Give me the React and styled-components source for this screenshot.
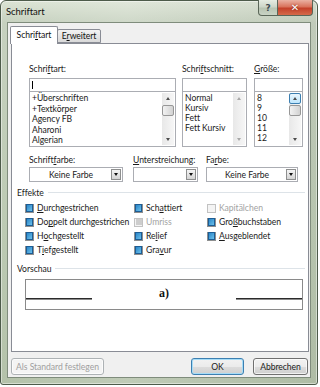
import styled, { createGlobalStyle, css } from "styled-components";

const Global = createGlobalStyle`
  html, body { margin: 0; padding: 0; background: #ffffff; }
  body {
    font-family: Lato, "Liberation Sans", sans-serif;
    font-size: 8.6px;
    letter-spacing: -0.05px;
    color: #1b1b1b;
  }
  * { box-sizing: border-box; }
`;

const Frame = styled.div`
  width: 318px;
  height: 385px;
  border: 1px solid #4d5b4a;
  border-radius: 6px 6px 3px 3px;
  background: linear-gradient(90deg, rgba(255,255,255,0.0), rgba(255,255,255,0.15) 40%, rgba(0,0,0,0.03)),
    linear-gradient(#dbe3d4, #c6d1bf 22px, #bccab3 60%, #b4c2aa);
  box-shadow: inset 0 0 0 1px rgba(255,255,255,0.45);
  display: flex;
  flex-direction: column;
  padding: 0 6px 6px 6px;
`;

const TitleBar = styled.div`
  height: 21px;
  display: flex;
  align-items: flex-start;
`;

const Title = styled.div`
  margin: 5px 0 0 -1px;
  font-size: 9.5px;
  color: #111;
`;

const TitleButtons = styled.div`
  margin: -1px -2px 0 auto;
  display: flex;
`;

const CaptionButton = styled.div`
  height: 16px;
  width: ${(p) => p.$w}px;
  border: 1px solid #5a6658;
  border-top: none;
  display: flex;
  align-items: center;
  justify-content: center;
  font-family: "DejaVu Sans", sans-serif;
  font-weight: bold;
  ${(p) =>
    p.$close
      ? css`
          border-radius: 0 0 4px 0;
          border-left: none;
          background: linear-gradient(#eab1a2, #d9735c 45%, #c4412a 55%, #d56a4a);
          color: #fff;
          font-size: 10px;
          text-shadow: 0 0 2px #7a1a0a;
        `
      : css`
          border-radius: 0 0 0 4px;
          background: linear-gradient(#e6ece2, #cdd6c8 45%, #b8c4b2 55%, #c9d3c4);
          color: #3c4a50;
          font-size: 9px;
        `}
`;

const Client = styled.div`
  flex: 1;
  background: #f0f0f0;
  border: 1px solid #7f8c7c;
  display: flex;
  flex-direction: column;
  padding: 3px 1px 2px 3px;
`;

const TabRow = styled.div`
  height: 17px;
  display: flex;
  align-items: flex-end;
  position: relative;
  z-index: 1;
`;

const Tab = styled.div`
  border: 1px solid #898c95;
  border-radius: 2px 2px 0 0;
  display: flex;
  align-items: center;
  justify-content: center;
  color: #111;
  ${(p) =>
    p.$active
      ? css`
          width: 48px;
          height: 18px;
          margin: 0 0 -1px -1px;
          background: #fff;
          border-bottom: none;
          padding-bottom: 1px;
        `
      : css`
          width: 44px;
          height: 14px;
          margin-left: -1px;
          background: linear-gradient(#f3f3f3, #e6e6e6 50%, #d9d9d9);
        `}
`;

const Panel = styled.div`
  height: 309px;
  width: 298px;
  background: #fff;
  border: 1px solid #898c95;
  padding: 20px 3px 0 5px;
  display: flex;
  flex-direction: column;
`;

const Indented = styled.div`
  margin-left: 12px;
  display: flex;
`;

const Column = styled.div`
  width: ${(p) => p.$w}px;
  margin-left: ${(p) => p.$gap || 0}px;
  display: flex;
  flex-direction: column;
`;

const Label = styled.div`
  height: ${(p) => p.$h || 14}px;
  line-height: 11px;
  color: #1b1b1b;
  white-space: nowrap;
`;

const TextBox = styled.div`
  height: 14px;
  border: 1px solid #abadb3;
  background: #fff;
  padding: 2px 0 0 2px;
`;

const Caret = styled.div`
  width: 1px;
  height: 8px;
  background: #000;
`;

const ListBox = styled.div`
  height: 55px;
  border: 1px solid #abadb3;
  border-top: none;
  background: #fff;
  display: flex;
`;

const Items = styled.div`
  flex: 1;
  padding: 1px 0 0 2px;
  overflow: hidden;
`;

const Item = styled.div`
  height: ${(p) => p.$h}px;
  line-height: ${(p) => p.$h}px;
  white-space: nowrap;
`;

const ScrollBar = styled.div`
  width: 12px;
  margin: 1px 1px 1px 0;
  background: linear-gradient(90deg, #e8e8e8, #f6f6f6);
  display: flex;
  flex-direction: column;
`;

const ArrowBtn = styled.div`
  height: 11px;
  display: flex;
  align-items: center;
  justify-content: center;
  border-radius: 2px;
  ${(p) =>
    p.$hot &&
    css`
      border: 1px solid #3c7fb1;
      background: linear-gradient(#eaf6fd, #bee6fd);
    `}
  &::after {
    content: "";
    border-left: 2.5px solid transparent;
    border-right: 2.5px solid transparent;
    ${(p) =>
      p.$down
        ? css`border-top: 3px solid ${p.$off ? "#a8a8a8" : "#4d4d4d"};`
        : css`border-bottom: 3px solid ${p.$off ? "#a8a8a8" : "#4d4d4d"};`}
  }
`;

const Thumb = styled.div`
  height: 11px;
  margin: 1px 0 0 0;
  border: 1px solid #979797;
  border-radius: 2px;
  background: linear-gradient(90deg, #f2f2f2, #e2e2e2 50%, #d2d2d2);
`;

const Fill = styled.div`
  flex: 1;
`;

const ComboRow = styled(Indented)`
  margin-top: 8px;
`;

const Combo = styled.div`
  height: 15px;
  border: 1px solid #abadb3;
  background: #fff;
  display: flex;
  align-items: stretch;
  padding: 1px;
`;

const ComboText = styled.div`
  flex: 1;
  text-align: center;
  line-height: 12px;
`;

const DropBtn = styled.div`
  width: 10px;
  border: 1px solid #8e8f8f;
  background: linear-gradient(#f4f4f4, #e4e4e4 50%, #d4d4d4);
  display: flex;
  align-items: center;
  justify-content: center;
  &::after {
    content: "";
    border-left: 2.5px solid transparent;
    border-right: 2.5px solid transparent;
    border-top: 3px solid #111;
  }
`;

const SectionHead = styled.div`
  display: flex;
  align-items: center;
  height: 11px;
  margin-top: ${(p) => p.$top}px;
  &::after {
    content: "";
    flex: 1;
    height: 1px;
    margin-left: 4px;
    background: #dde3e8;
  }
`;

const Effects = styled.div`
  margin: 3px 0 0 8px;
  display: grid;
  grid-template-columns: 109px 73px 1fr;
  grid-template-rows: repeat(4, 14px);
  grid-auto-flow: column;
`;

const Check = styled.div`
  display: flex;
  align-items: center;
  white-space: nowrap;
  color: ${(p) => (p.$off ? "#a3a3a3" : "#1b1b1b")};
`;

const Box = styled.span`
  width: 9px;
  height: 9px;
  margin-right: 3px;
  border: 1px solid ${(p) => (p.$off ? "#c2c2c2" : "#8e8f8f")};
  background: ${(p) => (p.$off ? "#f4f4f4" : "#fff")};
  display: flex;
  align-items: center;
  justify-content: center;
  &::after {
    content: "";
    width: 6px;
    height: 6px;
    ${(p) =>
      p.$state === "mixed" &&
      css`
        border: 1px solid #1d5d95;
        background: linear-gradient(135deg, #2a86c8, #6cc0ea);
      `}
    ${(p) =>
      p.$state === "gray" &&
      css`
        background: #cdcdcd;
      `}
  }
`;

const Preview = styled.div`
  margin: 5px 0 0 8px;
  width: 278px;
  height: 31px;
  border: 1px solid #8a8a8a;
  background: #fff;
  display: grid;
  grid-template-columns: 66px 1fr 66px;
  align-items: start;
`;

const Rule = styled.div`
  margin-top: 18px;
  height: 1px;
  background: #2b2b2b;
  box-shadow: 0 1px 0 #8a8a8a;
`;

const Sample = styled.div`
  margin-top: 7px;
  text-align: center;
  font-family: "Liberation Serif", serif;
  font-weight: bold;
  font-size: 12px;
  line-height: 13px;
  letter-spacing: 0;
  color: #111;
`;

const ButtonRow = styled.div`
  margin-top: 6px;
  display: flex;
  padding-right: 1px;
`;

const Button = styled.div`
  height: 17px;
  width: ${(p) => p.$w}px;
  margin-left: ${(p) => p.$ml || 0}px;
  border: 1px solid ${(p) => (p.$default ? "#3c7fb1" : p.$off ? "#adb2b5" : "#707070")};
  border-radius: 3px;
  display: flex;
  align-items: center;
  justify-content: center;
  color: ${(p) => (p.$off ? "#a0a0a0" : "#1b1b1b")};
  background: ${(p) =>
    p.$off ? "#f4f4f4" : "linear-gradient(#f2f2f2, #ebebeb 50%, #dddddd 51%, #cfcfcf)"};
  box-shadow: ${(p) => (p.$default ? "inset 0 0 0 1px #a6dcf7" : "inset 0 0 0 1px rgba(255,255,255,0.7)")};
`;

function ScrollBox({ hot, disabled }) {
  return (
    <ScrollBar>
      <ArrowBtn $hot={hot} $off={disabled} />
      {!disabled && <Thumb />}
      <Fill />
      <ArrowBtn $down $off={disabled} />
    </ScrollBar>
  );
}

function FontColumn({ w, gap, label, items, rowH, caret, hot, disabled }) {
  return (
    <Column $w={w} $gap={gap}>
      <Label>{label}</Label>
      <TextBox>{caret && <Caret />}</TextBox>
      <ListBox>
        <Items>
          {items.map((it) => (
            <Item key={it} $h={rowH}>
              {it}
            </Item>
          ))}
        </Items>
        <ScrollBox hot={hot} disabled={disabled} />
      </ListBox>
    </Column>
  );
}

function ColorCombo({ w, gap, label, value }) {
  return (
    <Column $w={w} $gap={gap}>
      <Label $h={12}>{label}</Label>
      <Combo>
        <ComboText>{value}</ComboText>
        <DropBtn />
      </Combo>
    </Column>
  );
}

const effects = [
  { key: "d", label: <><u>D</u>urchgestrichen</>, state: "mixed" },
  { key: "dd", label: <>Do<u>p</u>pelt durchgestrichen</>, state: "mixed" },
  { key: "h", label: <>H<u>o</u>chgestellt</>, state: "mixed" },
  { key: "t", label: <>T<u>i</u>efgestellt</>, state: "mixed" },
  { key: "s", label: <>Sch<u>a</u>ttiert</>, state: "mixed" },
  { key: "u", label: <>Umriss</>, state: "gray", off: true },
  { key: "r", label: <>Re<u>l</u>ief</>, state: "mixed" },
  { key: "g", label: <>Gra<u>v</u>ur</>, state: "mixed" },
  { key: "k", label: <>Kapitälchen</>, state: "none", off: true },
  { key: "gb", label: <>Gro<u>ß</u>buchstaben</>, state: "mixed" },
  { key: "a", label: <><u>A</u>usgeblendet</>, state: "mixed" },
];

export default function App() {
  return (
    <>
      <Global />
      <Frame>
        <TitleBar>
          <Title>Schriftart</Title>
          <TitleButtons>
            <CaptionButton $w={20}>?</CaptionButton>
            <CaptionButton $w={35} $close>✕</CaptionButton>
          </TitleButtons>
        </TitleBar>
        <Client>
          <TabRow>
            <Tab $active>Schri<u>f</u>tart</Tab>
            <Tab>E<u>r</u>weitert</Tab>
          </TabRow>
          <Panel>
            <Indented>
              <FontColumn
                w={147}
                label={<>Schri<u>f</u>tart:</>}
                items={["+Überschriften", "+Textkörper", "Agency FB", "Aharoni", "Algerian"]}
                rowH={10.6}
                caret
              />
              <FontColumn
                w={65}
                gap={6}
                label={<>Schri<u>f</u>tschnitt:</>}
                items={["Normal", "Kursiv", "Fett", "Fett Kursiv"]}
                rowH={10}
                disabled
              />
              <FontColumn
                w={49}
                gap={7}
                label={<><u>G</u>röße:</>}
                items={["8", "9", "10", "11", "12"]}
                rowH={10}
                hot
              />
            </Indented>
            <ComboRow>
              <ColorCombo w={94} label={<>Schrift<u>f</u>arbe:</>} value="Keine Farbe" />
              <ColorCombo w={65} gap={10} label={<><u>U</u>nterstreichung:</>} value="" />
              <ColorCombo w={92} gap={8} label={<>Fa<u>r</u>be:</>} value="Keine Farbe" />
            </ComboRow>
            <SectionHead $top={5}>Effekte</SectionHead>
            <Effects>
              {effects.map((e) => (
                <Check key={e.key} $off={e.off}>
                  <Box $state={e.state} $off={e.off} />
                  {e.label}
                </Check>
              ))}
            </Effects>
            <SectionHead $top={6}>Vorschau</SectionHead>
            <Preview>
              <Rule />
              <Sample>a)</Sample>
              <Rule />
            </Preview>
          </Panel>
          <ButtonRow>
            <Button $w={93} $off>Als Standard festlegen</Button>
            <Button $w={53} $ml={87} $default>OK</Button>
            <Button $w={55} $ml={9}>Abbrechen</Button>
          </ButtonRow>
        </Client>
      </Frame>
    </>
  );
}
